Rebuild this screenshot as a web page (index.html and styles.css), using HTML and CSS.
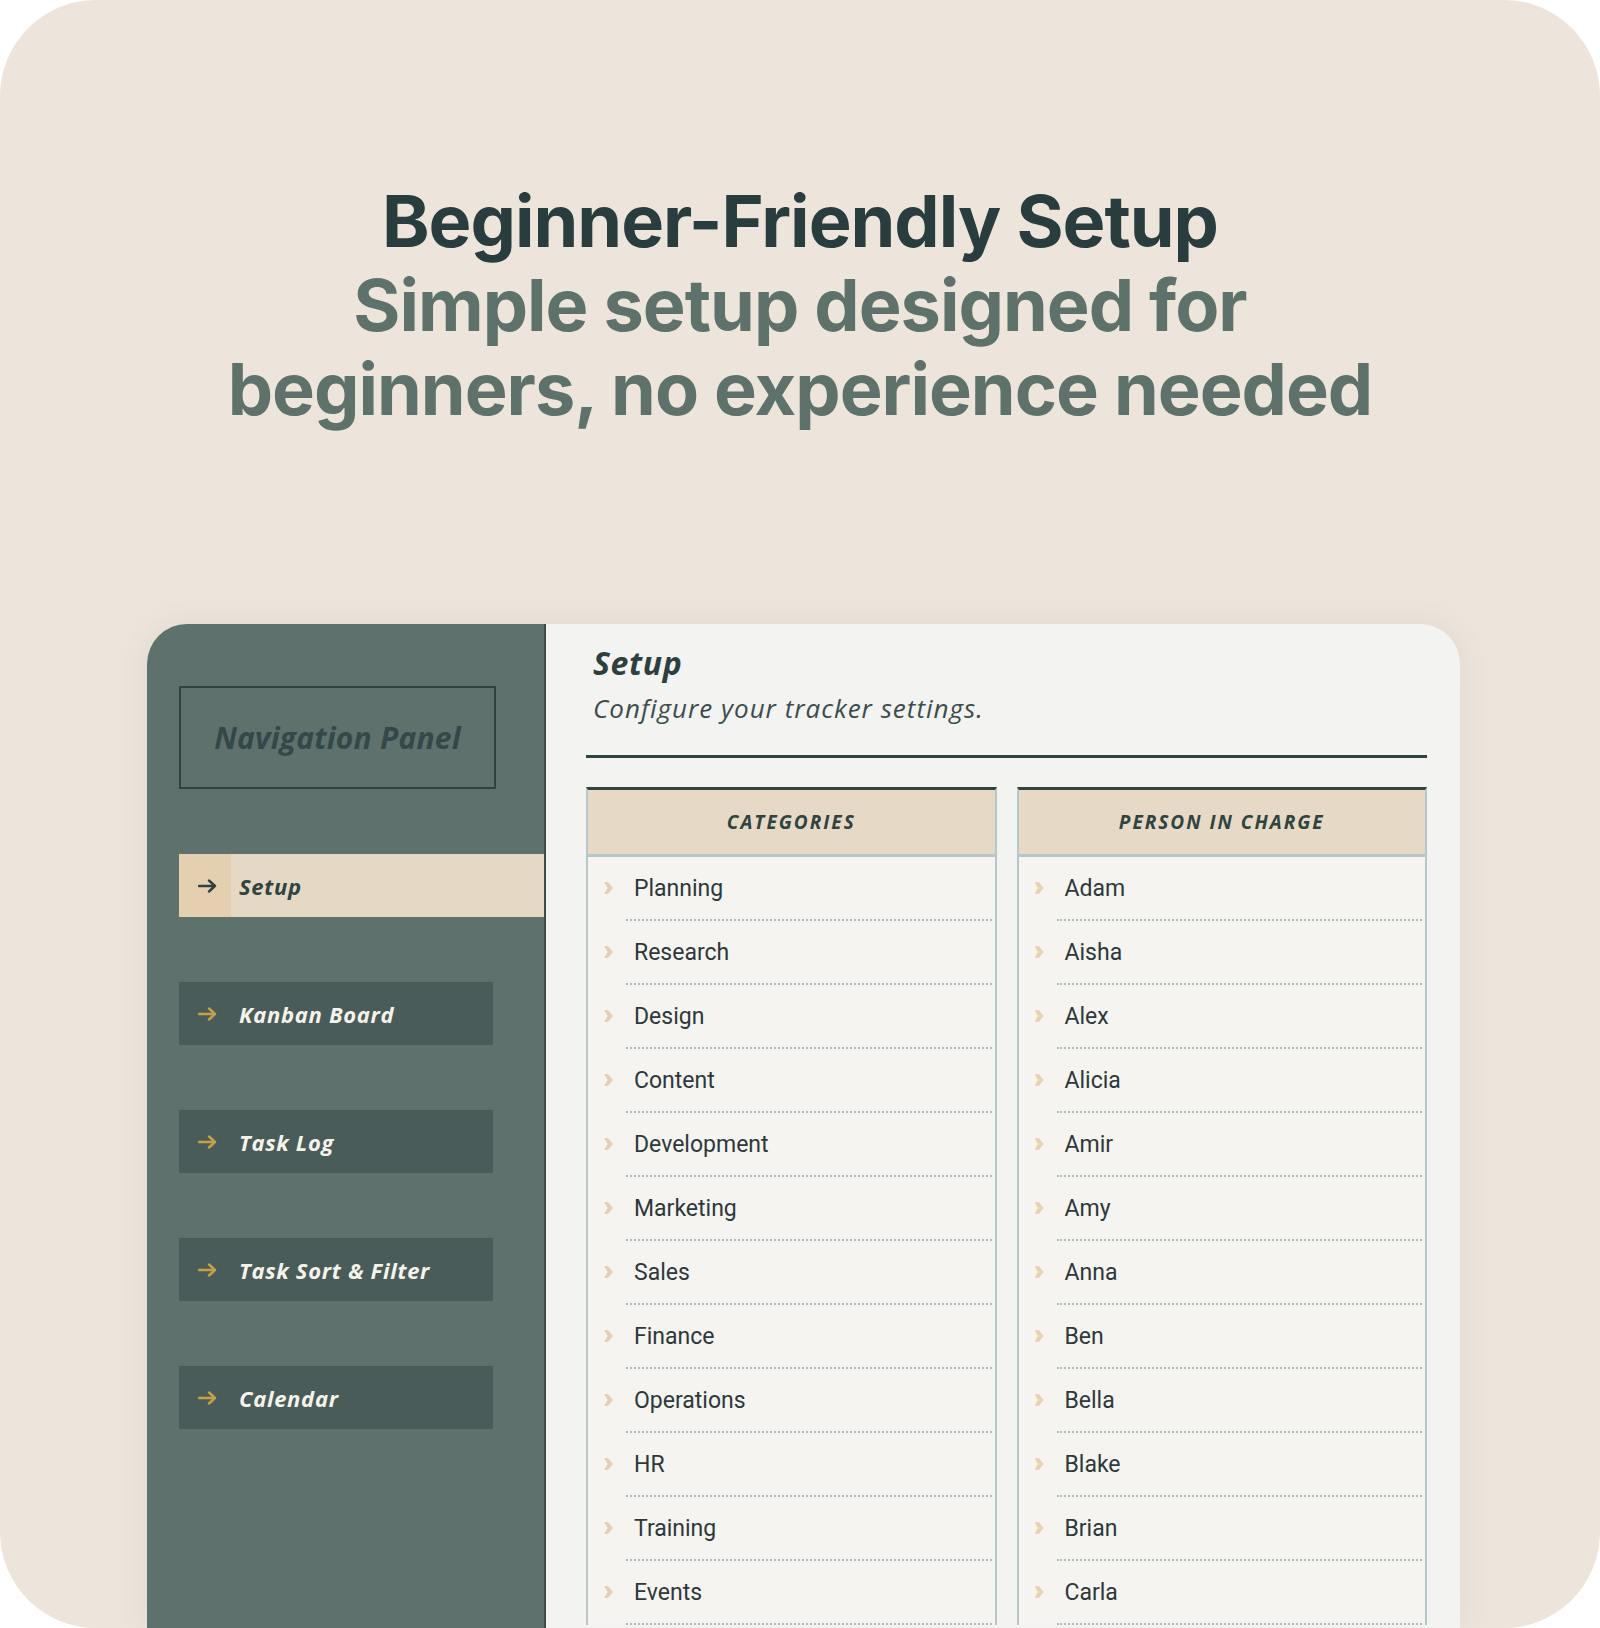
FILE: index.html
```html
<!DOCTYPE html>
<html lang="en">
<head>
<meta charset="utf-8">
<title>Beginner-Friendly Setup</title>
<link rel="stylesheet" href="styles.css">
</head>
<body>
<div class="page">
  <header class="hero">
    <h1 class="hero-title">Beginner-Friendly Setup</h1>
    <p class="hero-sub">Simple setup designed for<br>beginners, no experience needed</p>
  </header>

  <div class="app">
    <aside class="sidebar">
      <div class="nav-title">Navigation Panel</div>
      <nav class="nav">
        <a class="nav-item is-active">
          <span class="nav-icon"><svg viewBox="0 0 20 14" width="20" height="14"><path d="M1 7h16M11 1.5 17 7l-6 5.5" fill="none" stroke="currentColor" stroke-width="2.4" stroke-linecap="round" stroke-linejoin="round"/></svg></span>
          <span class="nav-label">Setup</span>
        </a>
        <a class="nav-item">
          <span class="nav-icon"><svg viewBox="0 0 20 14" width="20" height="14"><path d="M1 7h16M11 1.5 17 7l-6 5.5" fill="none" stroke="currentColor" stroke-width="2.4" stroke-linecap="round" stroke-linejoin="round"/></svg></span>
          <span class="nav-label">Kanban Board</span>
        </a>
        <a class="nav-item">
          <span class="nav-icon"><svg viewBox="0 0 20 14" width="20" height="14"><path d="M1 7h16M11 1.5 17 7l-6 5.5" fill="none" stroke="currentColor" stroke-width="2.4" stroke-linecap="round" stroke-linejoin="round"/></svg></span>
          <span class="nav-label">Task Log</span>
        </a>
        <a class="nav-item">
          <span class="nav-icon"><svg viewBox="0 0 20 14" width="20" height="14"><path d="M1 7h16M11 1.5 17 7l-6 5.5" fill="none" stroke="currentColor" stroke-width="2.4" stroke-linecap="round" stroke-linejoin="round"/></svg></span>
          <span class="nav-label">Task Sort &amp; Filter</span>
        </a>
        <a class="nav-item">
          <span class="nav-icon"><svg viewBox="0 0 20 14" width="20" height="14"><path d="M1 7h16M11 1.5 17 7l-6 5.5" fill="none" stroke="currentColor" stroke-width="2.4" stroke-linecap="round" stroke-linejoin="round"/></svg></span>
          <span class="nav-label">Calendar</span>
        </a>
      </nav>
    </aside>

    <main class="main">
      <div class="main-head">
        <h2 class="main-title">Setup</h2>
        <p class="main-sub">Configure your tracker settings.</p>
      </div>
      <hr class="rule">

      <div class="lists">
        <section class="list">
          <div class="list-head">CATEGORIES</div>
          <ul class="list-body">
            <li class="row"><span class="chev"></span><span class="row-text">Planning</span></li>
            <li class="row"><span class="chev"></span><span class="row-text">Research</span></li>
            <li class="row"><span class="chev"></span><span class="row-text">Design</span></li>
            <li class="row"><span class="chev"></span><span class="row-text">Content</span></li>
            <li class="row"><span class="chev"></span><span class="row-text">Development</span></li>
            <li class="row"><span class="chev"></span><span class="row-text">Marketing</span></li>
            <li class="row"><span class="chev"></span><span class="row-text">Sales</span></li>
            <li class="row"><span class="chev"></span><span class="row-text">Finance</span></li>
            <li class="row"><span class="chev"></span><span class="row-text">Operations</span></li>
            <li class="row"><span class="chev"></span><span class="row-text">HR</span></li>
            <li class="row"><span class="chev"></span><span class="row-text">Training</span></li>
            <li class="row"><span class="chev"></span><span class="row-text">Events</span></li>
          </ul>
        </section>

        <section class="list">
          <div class="list-head">PERSON IN CHARGE</div>
          <ul class="list-body">
            <li class="row"><span class="chev"></span><span class="row-text">Adam</span></li>
            <li class="row"><span class="chev"></span><span class="row-text">Aisha</span></li>
            <li class="row"><span class="chev"></span><span class="row-text">Alex</span></li>
            <li class="row"><span class="chev"></span><span class="row-text">Alicia</span></li>
            <li class="row"><span class="chev"></span><span class="row-text">Amir</span></li>
            <li class="row"><span class="chev"></span><span class="row-text">Amy</span></li>
            <li class="row"><span class="chev"></span><span class="row-text">Anna</span></li>
            <li class="row"><span class="chev"></span><span class="row-text">Ben</span></li>
            <li class="row"><span class="chev"></span><span class="row-text">Bella</span></li>
            <li class="row"><span class="chev"></span><span class="row-text">Blake</span></li>
            <li class="row"><span class="chev"></span><span class="row-text">Brian</span></li>
            <li class="row"><span class="chev"></span><span class="row-text">Carla</span></li>
          </ul>
        </section>
      </div>
    </main>
  </div>
</div>
</body>
</html>
```

FILE: styles.css
```css
* {
  box-sizing: border-box;
}

html,
body {
  margin: 0;
  padding: 0;
  background: #ffffff;
}

.page {
  width: 1600px;
  height: 1628px;
  background: #ede5dc;
  border-radius: 96px;
  overflow: hidden;
  font-family: "Inter", "Liberation Sans", sans-serif;
}

/* ---------- hero copy ---------- */
.hero {
  padding-top: 179px;
  text-align: center;
}

.hero-title,
.hero-sub {
  margin: 0;
  font-size: 72px;
  line-height: 84px;
  font-weight: 700;
  letter-spacing: -1px;
}

.hero-title {
  color: #2a3d3e;
}

.hero-sub {
  color: #5f716b;
}

/* ---------- app window ---------- */
.app {
  margin-top: 193px;
  margin-left: 147px;
  width: 1313px;
  height: 1004px;
  display: flex;
  border-radius: 40px 40px 0 0;
  overflow: hidden;
  box-shadow: 0 0 28px rgba(120, 100, 80, 0.10);
}

/* ---------- sidebar ---------- */
.sidebar {
  width: 399px;
  flex: none;
  background: #5f716d;
  border-right: 2px solid #3b4e4b;
  padding: 62px 0 0 32px;
  font-family: "Open Sans", "Liberation Sans", sans-serif;
}

.nav-title {
  width: 317px;
  height: 103px;
  border: 2px solid #2f4340;
  display: flex;
  align-items: center;
  justify-content: center;
  font-size: 30px;
  font-style: italic;
  font-weight: 700;
  color: #34484a;
  letter-spacing: 0.2px;
}

.nav {
  margin-top: 65px;
  display: flex;
  flex-direction: column;
  gap: 65px;
}

.nav-item {
  width: 314px;
  height: 63px;
  display: flex;
  align-items: center;
  background: #4a5c59;
  color: #f6f3ec;
  text-decoration: none;
}

.nav-icon {
  width: 52px;
  height: 100%;
  flex: none;
  display: flex;
  align-items: center;
  padding-left: 19px;
  color: #c99f4f;
}

.nav-label {
  margin-left: 8px;
  font-size: 22px;
  font-style: italic;
  font-weight: 700;
  letter-spacing: 0.7px;
}

.nav-item.is-active {
  width: 100%;
  background: #e5d8c5;
  color: #2f4340;
}

.nav-item.is-active .nav-icon {
  background: #e4cfb1;
  color: #2f4340;
}

/* ---------- main panel ---------- */
.main {
  flex: 1;
  background: #f3f3f2;
  padding: 19px 33px 0 40px;
  font-family: "Open Sans", "Liberation Sans", sans-serif;
}

.main-head {
  padding-left: 7px;
}

.main-title {
  margin: 0;
  font-size: 32px;
  line-height: 40px;
  font-style: italic;
  font-weight: 700;
  color: #2f3f40;
  letter-spacing: 0.6px;
}

.main-sub {
  margin: 9px 0 0;
  font-size: 26px;
  line-height: 32px;
  font-style: italic;
  color: #3b4d4d;
  letter-spacing: 1px;
}

.rule {
  margin: 31px 0 0;
  border: 0;
  height: 3px;
  background: #2f4340;
}

.lists {
  margin-top: 29px;
  display: grid;
  grid-template-columns: 1fr 1fr;
  gap: 20px;
  align-items: start;
}

.list {
  border-top: 3px solid #2f4340;
  border-left: 2px solid #b7c6c9;
  border-right: 2px solid #b7c6c9;
  background: #f5f4f0;
}

.list-head {
  height: 67px;
  background: #e6d9c5;
  border-bottom: 3px solid #b7c6c9;
  display: flex;
  align-items: center;
  justify-content: center;
  font-size: 19px;
  font-style: italic;
  font-weight: 700;
  letter-spacing: 2px;
  color: #2f4340;
}

.list-body {
  list-style: none;
  margin: 0;
  padding: 0;
}

.row {
  position: relative;
  height: 64px;
  padding: 0 0 2px 16px;
  display: flex;
  align-items: center;
}

/* dotted divider, inset under the text column */
.row::after {
  content: "";
  position: absolute;
  left: 38px;
  right: 3px;
  bottom: 0;
  border-bottom: 2px dotted #aebcbe;
}

.chev {
  width: 9px;
  height: 12px;
  flex: none;
  background: #e6d2b3;
  clip-path: polygon(0 0, 45% 0, 100% 50%, 45% 100%, 0 100%, 40% 50%);
}

.row-text {
  margin-left: 21px;
  font-family: "Roboto", "Liberation Sans", sans-serif;
  font-size: 23px;
  color: #2e383b;
}
```
